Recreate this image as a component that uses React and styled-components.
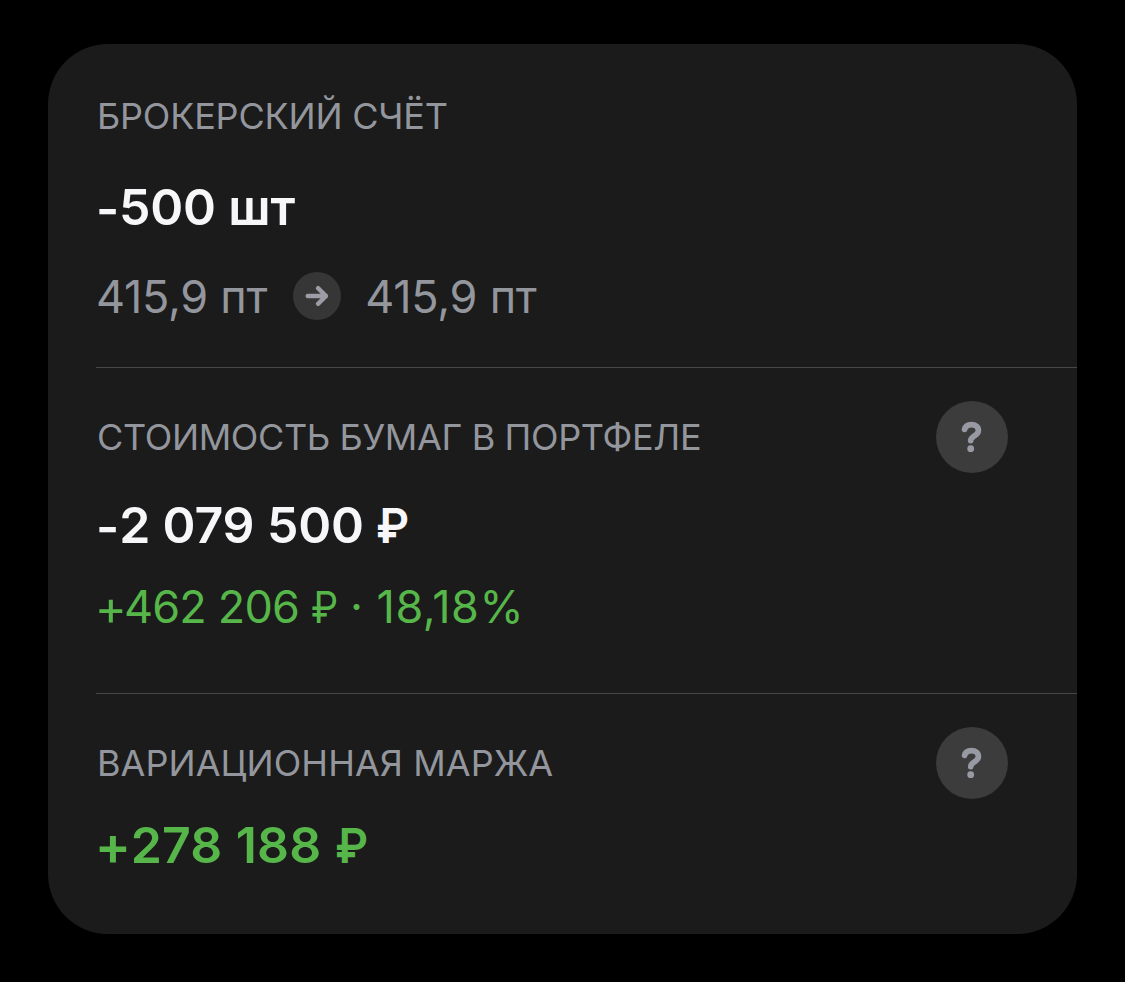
import React from 'react';
import styled, { createGlobalStyle } from 'styled-components';

const GlobalStyle = createGlobalStyle`
  body {
    margin: 0;
    background: #000;
    font-family: Inter, "Liberation Sans", sans-serif;
  }
`;

const Page = styled.div`
  box-sizing: border-box;
  height: 982px;
  padding: 44px 48px 48px;
`;

const Card = styled.main`
  box-sizing: border-box;
  display: flex;
  flex-direction: column;
  height: 890px;
  padding-left: 48px;
  border-radius: 60px;
  background: #1b1b1b;
  overflow: hidden;
`;

const Section = styled.section`
  box-sizing: border-box;
  height: ${props => props.$height}px;
  padding-top: ${props => props.$top}px;
  border-top: ${props => (props.$divided ? '1px solid #48484a' : 'none')};
`;

const Header = styled.header`
  display: flex;
  align-items: center;
  justify-content: space-between;
  height: 72px;
  padding-right: 69px;
`;

const Title = styled.h2`
  margin: 0 0 0 1px;
  color: #93969d;
  font-size: 36px;
  font-weight: 400;
  line-height: 44px;
  letter-spacing: ${props => props.$spacing || 0}px;
  white-space: nowrap;
`;

const Amount = styled.div`
  display: flex;
  margin-top: ${props => props.$top}px;
  color: ${props => (props.$green ? '#56b649' : '#f7f7f9')};
  font-size: 50px;
  font-weight: 600;
  line-height: 60px;
  letter-spacing: ${props => props.$spacing || 0}px;
  word-spacing: ${props => props.$wordSpacing || 0}px;
  white-space: pre;
`;

const Prices = styled.div`
  display: flex;
  align-items: center;
  margin-top: 28px;
  color: #93969d;
`;

const Value = styled.div`
  display: flex;
  margin-top: ${props => props.$top || 0}px;
  color: ${props => (props.$green ? '#56b649' : 'inherit')};
  font-size: 45px;
  line-height: 60px;
  letter-spacing: ${props => props.$spacing || 0}px;
  white-space: pre;
`;

/* plus and minus sit a little lower and wider than the font draws them */
const Sign = styled.span`
  margin-right: ${props => props.$right || 0}px;
  transform: translateY(${props => props.$drop}px) scale(${props => props.$scale || 1});
`;

const Ruble = styled.span`
  transform: scale(${props => props.$width}, 0.96);
  transform-origin: 0 78%;
`;

const Percent = styled.span`
  margin-left: -5px;
  letter-spacing: 0.5px;
`;

const Arrow = styled.div`
  display: flex;
  width: 48px;
  height: 48px;
  margin: 0 24px 0 26px;
  border-radius: 50%;
  background: #363636;
`;

const Help = styled.button`
  display: flex;
  width: 72px;
  height: 72px;
  padding: 0;
  border: 0;
  border-radius: 50%;
  background: #3c3c3c;
  color: #979aa3;
`;

const ArrowIcon = () => (
  <svg width="48" height="48" viewBox="0 0 48 48" fill="none" stroke="#9b9ca6" strokeWidth="4.4" strokeLinecap="round" strokeLinejoin="round">
    <path d="M14.7 24H33M25 16.2L33 24L25 31.8" />
  </svg>
);

const HelpIcon = () => (
  <svg width="72" height="72" viewBox="0 0 72 72" fill="none" stroke="currentColor" strokeWidth="5.7" strokeLinecap="round" strokeLinejoin="round">
    <path d="M28.6 28.4C29.4 25.2 31.8 23.6 35.4 23.6C39.6 23.6 42.4 25.8 42.4 29.4C42.4 34.8 34.7 34.8 34.7 39.6" />
    <circle cx="34.7" cy="47.7" r="3.4" fill="currentColor" stroke="none" />
  </svg>
);

const HelpButton = () => (
  <Help type="button" aria-label="Справка">
    <HelpIcon />
  </Help>
);

function App() {
  return (
    <Page>
      <GlobalStyle />
      <Card>
        <Section $height={323} $top={36}>
          <Header>
            <Title $spacing={-0.2}>БРОКЕРСКИЙ СЧЁТ</Title>
          </Header>
          <Amount $top={25} $spacing={-0.2}>
            <Sign $drop={2}>-</Sign>
            <span>500 шт</span>
          </Amount>
          <Prices>
            <Value $top={2} $spacing={-0.25}>415,9 пт</Value>
            <Arrow><ArrowIcon /></Arrow>
            <Value $top={2} $spacing={-0.25}>415,9 пт</Value>
          </Prices>
        </Section>
        <Section $height={326} $top={33} $divided>
          <Header>
            <Title $spacing={-0.36}>СТОИМОСТЬ БУМАГ В ПОРТФЕЛЕ</Title>
            <HelpButton />
          </Header>
          <Amount $top={22} $spacing={-0.15}>
            <Sign $drop={2}>-</Sign>
            <span>2 079 500 </span>
            <Ruble $width={0.91}>₽</Ruble>
          </Amount>
          <Value $top={22} $green $spacing={-0.8}>
            <Sign $drop={1} $scale={1.08} $right={-1}>+</Sign>
            <span>462 206 </span>
            <Ruble $width={0.86}>₽</Ruble>
            <Percent> · 18,18%</Percent>
          </Value>
        </Section>
        <Section $height={241} $top={33} $divided>
          <Header>
            <Title $spacing={0.05}>ВАРИАЦИОННАЯ МАРЖА</Title>
            <HelpButton />
          </Header>
          <Amount $top={16} $green $spacing={0.1} $wordSpacing={0.8}>
            <Sign $drop={1} $scale={1.08} $right={1}>+</Sign>
            <span>278 188 </span>
            <Ruble $width={0.91}>₽</Ruble>
          </Amount>
        </Section>
      </Card>
    </Page>
  );
}

export default App;
